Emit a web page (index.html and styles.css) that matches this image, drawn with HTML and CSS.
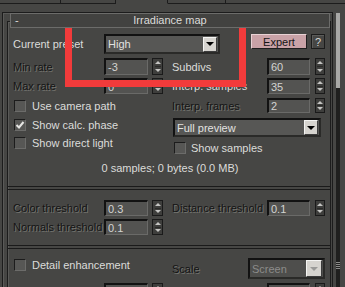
FILE: index.html
```html
<!DOCTYPE html>
<html lang="en">
<head>
	<meta charset="UTF-8" />
	<meta name="viewport" content="width=device-width, initial-scale=1.0" />
	<title>Irradiance map</title>
	<link rel="stylesheet" href="styles.css">
</head>
<body>
<div class="app">
	<div class="tabs">
		<span class="tab tab-1"></span>
		<span class="tab tab-2"></span>
		<span class="tab tab-3 active"></span>
		<span class="tab tab-4"></span>
		<span class="tab tab-5"></span>
	</div>
	<div class="workspace">
		<div class="main">
			<div class="rollout">
				<div class="rollout-head">
					<span class="toggle">-</span>
					<span class="title">Irradiance map</span>
					<span></span>
				</div>
				<div class="group">
					<div class="row r-preset">
						<span class="lbl-l">Current preset</span>
						<div class="combo combo-preset"><span class="combo-text">High</span><span class="combo-btn"></span></div>
						<span class="btn expert">Expert</span>
						<span class="btn help">?</span>
					</div>

					<div class="row r-min">
						<div class="half-l">
							<span class="lbl-l off">Min rate</span>
							<span class="field field-l">-3</span>
							<span class="spin spin-l"></span>
						</div>
						<div class="half-r">
							<span class="lbl-r">Subdivs</span>
							<span class="field field-r">60</span>
							<span class="spin spin-r"></span>
						</div>
					</div>

					<div class="row r-max">
						<div class="half-l">
							<span class="lbl-l off">Max rate</span>
							<span class="field field-l">0</span>
							<span class="spin spin-l"></span>
						</div>
						<div class="half-r">
							<span class="lbl-r">Interp. samples</span>
							<span class="field field-r">35</span>
							<span class="spin spin-r"></span>
						</div>
					</div>

					<div class="row r-camera">
						<div class="half-l">
							<label class="check"><span class="box"></span>Use camera path</label>
						</div>
						<div class="half-r">
							<span class="lbl-r off">Interp. frames</span>
							<span class="field field-r">2</span>
							<span class="spin spin-r"></span>
						</div>
					</div>

					<div class="row r-phase">
						<div class="half-l top">
							<label class="check"><span class="box"><svg width="10" height="10" viewBox="0 0 10 10"><polyline points="1.5,5 4,7.5 8.5,2" fill="none" stroke="#e6e6e4" stroke-width="2"/></svg></span>Show calc. phase</label>
						</div>
						<div class="half-r">
							<div class="combo combo-mode"><span class="combo-text">Full preview</span><span class="combo-btn"></span></div>
						</div>
					</div>

					<div class="row r-direct">
						<div class="half-l top">
							<label class="check"><span class="box"></span>Show direct light</label>
						</div>
						<div class="half-r bottom">
							<label class="check check-r"><span class="box"></span>Show samples</label>
						</div>
					</div>

					<div class="info">0 samples; 0 bytes (0.0 MB)</div>

					<div class="sep"></div>

					<div class="row r-color">
						<div class="half-l">
							<span class="lbl-l off">Color threshold</span>
							<span class="field field-l">0.3</span>
							<span class="spin spin-l"></span>
						</div>
						<div class="half-r">
							<span class="lbl-r off">Distance threshold</span>
							<span class="field field-r">0.1</span>
							<span class="spin spin-r"></span>
						</div>
					</div>

					<div class="row r-normals">
						<div class="half-l">
							<span class="lbl-l off">Normals threshold</span>
							<span class="field field-l">0.1</span>
							<span class="spin spin-l"></span>
						</div>
					</div>

					<div class="sep sep-2"></div>

					<div class="row r-detail">
						<div class="half-l top">
							<label class="check"><span class="box"></span>Detail enhancement</label>
						</div>
						<div class="half-r">
							<span class="lbl-scale off">Scale</span>
							<div class="combo combo-scale disabled"><span class="combo-text">Screen</span><span class="combo-btn"></span></div>
						</div>
					</div>

					<div class="row r-radius">
						<div class="half-l">
							<span class="lbl-l off">Radius</span>
							<span class="field field-l">60.0</span>
							<span class="spin spin-l"></span>
						</div>
						<div class="half-r">
							<span class="lbl-r off">Subdivs mult.</span>
							<span class="field field-r">0.3</span>
							<span class="spin spin-r"></span>
						</div>
					</div>
				</div>
			</div>
		</div>
		<div class="scrollbar">
			<div class="track">
				<div class="thumb"></div>
				<div class="grip"></div>
			</div>
		</div>
	</div>
	<div class="annot"></div>
</div>
</body>
</html>
```

FILE: styles.css
```css
body {
	margin: 0;
	background: #464644;
	font-family: "Liberation Sans", Arial, sans-serif;
	font-size: 11px;
	color: #dcdcda;
}
.app {
	position: relative;
	width: 345px;
	height: 287px;
	overflow: hidden;
}

/* top tab strip */
.tabs {
	display: flex;
	height: 4px;
}
.tab {
	box-sizing: border-box;
	border-right: 1px solid #1c1c1c;
	border-bottom: 1px solid #1c1c1c;
}
.tab-1 { width: 61px; }
.tab-2 { width: 55px; }
.tab-3 { width: 52px; }
.tab-4 { width: 58px; }
.tab-5 { flex: 1; border-right: none; }
.tab.active { border-bottom-color: transparent; }

.workspace {
	display: flex;
	height: 283px;
}
.main {
	width: 333px;
}

/* rollout */
.rollout {
	margin: 8px 0 0 2px;
	width: 331px;
	height: 275px;
	box-sizing: border-box;
	border: 1px solid #1c1c1c;
	border-bottom: none;
	box-shadow: inset 1px 1px 0 #5a5a58;
}
.rollout-head {
	position: relative;
	z-index: 1;
	margin-left: 7px;
	width: 320px;
	height: 15px;
	box-sizing: border-box;
	border: 1px solid #6c6c6a;
	background: #424240;
	display: grid;
	grid-template-columns: 20px 1fr 20px;
	align-items: center;
	line-height: 13px;
}
.toggle {
	padding-left: 4px;
}
.title {
	text-align: center;
}
.group {
	margin: -7px 0 0 4px;
	width: 324px;
	height: 266px;
	box-sizing: border-box;
	border: 1px solid #1c1c1c;
	border-bottom: none;
	box-shadow: inset 1px 1px 0 #5a5a58;
	padding: 12px 0 0 5px;
}

/* rows */
.row {
	display: flex;
	align-items: center;
}
.half-l {
	width: 150px;
	height: 100%;
	display: flex;
	align-items: center;
}
.half-r {
	width: 153px;
	height: 100%;
	margin-left: 9px;
	display: flex;
	align-items: center;
}
.half-l.top { align-items: flex-start; }
.half-r.bottom { align-items: flex-end; }
.lbl-l { width: 91px; flex: none; white-space: nowrap; }
.lbl-r { width: 95px; flex: none; white-space: nowrap; }
.lbl-scale { width: 76px; flex: none; }
.off {
	color: #141414;
	text-shadow: 1px 1px 0 #74746f;
}

.r-preset { height: 20px; align-items: flex-start; }
.r-preset .lbl-l { line-height: 20px; }
.r-min { margin-top: 4px; height: 17px; }
.r-max { margin-top: 3px; height: 16px; }
.r-camera { margin-top: 4px; height: 15px; }
.r-camera .check { margin-top: 0; }
.r-phase { margin-top: 5px; height: 19px; }
.r-phase .check { margin-top: 1px; }
.r-direct { margin-top: 0; height: 17px; }
.r-color { margin-top: 10px; height: 16px; }
.r-normals { margin-top: 3px; height: 16px; }
.r-detail { margin-top: 9px; height: 21px; }
.r-detail .check { margin-top: 1px; }
.r-radius { margin-top: 4px; height: 16px; }

/* spinner fields */
.field {
	height: 100%;
	box-sizing: border-box;
	flex: none;
	background: #535351;
	border-style: solid;
	border-width: 2px 1px 1px 2px;
	border-color: #121212 #6a6a68 #6a6a68 #121212;
	padding-left: 2px;
	display: flex;
	align-items: center;
	color: #d4d4d2;
}
.field-l { width: 44px; }
.field-r { width: 43px; }
.spin {
	height: 100%;
	box-sizing: border-box;
	flex: none;
	background: #3e3e3c linear-gradient(#2a2a28, #2a2a28) center / 6px 1px no-repeat;
	border: 1px solid #1a1a1a;
	display: flex;
	flex-direction: column;
	align-items: center;
	justify-content: space-around;
}
.spin::before,
.spin::after {
	content: "";
	width: 0;
	height: 0;
	border-left: 3px solid transparent;
	border-right: 3px solid transparent;
}
.spin::before { border-bottom: 3px solid #c4c4c2; }
.spin::after { border-top: 3px solid #c4c4c2; }
.spin-l { width: 11px; margin-left: 4px; }
.spin-r { width: 10px; margin-left: 5px; }

/* drop-down lists */
.combo {
	box-sizing: border-box;
	display: flex;
	align-items: center;
	background: #575755;
	border: 2px solid #121212;
	border-right-color: #2a2a28;
	border-bottom-color: #2a2a28;
	flex: none;
}
.combo-text {
	flex: 1;
	padding-left: 2px;
	color: #e2e2e0;
}
.combo-btn {
	width: 14px;
	height: 15px;
	margin-right: 1px;
	box-sizing: border-box;
	background: #d6d4cf;
	border: 1px solid;
	border-color: #f4f4f2 #3c3c3c #3c3c3c #f4f4f2;
	display: flex;
	align-items: center;
	justify-content: center;
}
.combo-btn::after {
	content: "";
	width: 0;
	height: 0;
	border-left: 4px solid transparent;
	border-right: 4px solid transparent;
	border-top: 4px solid #000;
}
.combo-preset { width: 116px; height: 20px; }
.combo-mode { width: 148px; height: 19px; margin-left: 1px; }
.combo-scale { width: 77px; height: 21px; }
.combo-scale .combo-btn { height: 17px; width: 16px; }
.combo.disabled { background: #4e4e4c; }
.combo.disabled .combo-text { color: #8c8c8a; }
.combo.disabled .combo-btn::after { border-top-color: #9a9a98; }

/* buttons */
.btn {
	box-sizing: border-box;
	height: 15px;
	border: 1px solid;
	display: flex;
	align-items: center;
	justify-content: center;
	flex: none;
}
.expert {
	width: 56px;
	margin-left: 31px;
	background: #c9a2a7;
	border-color: #e8d2d4 #1e1e1e #1e1e1e #e8d2d4;
	color: #141414;
}
.help {
	width: 14px;
	margin-left: 4px;
	background: #464644;
	border-color: #1c1c1c;
	box-shadow: inset 1px 1px 0 #5c5c5a;
	color: #d6d6d4;
}

/* checkboxes */
.check {
	display: flex;
	align-items: center;
	margin-left: 1px;
	white-space: nowrap;
}
.check-r { margin-left: 2px; }
.box {
	width: 12px;
	height: 12px;
	box-sizing: border-box;
	background: #575755;
	border: 1px solid;
	border-color: #1c1c1c #6c6c6a #6c6c6a #1c1c1c;
	margin-right: 6px;
	display: flex;
	align-items: center;
	justify-content: center;
}
.check-r .box { margin-right: 5px; }

.info {
	margin-top: 8px;
	height: 13px;
	line-height: 13px;
	text-align: center;
	padding-right: 3px;
}
.sep {
	margin: 11px 0 0 -5px;
	height: 4px;
	box-sizing: border-box;
	border-top: 1px solid #1a1a1a;
	border-bottom: 1px solid #1a1a1a;
}
.sep-2 { margin-top: 10px; }

/* scrollbar */
.scrollbar {
	width: 12px;
	padding: 9px 0 0 3px;
	box-sizing: border-box;
}
.track {
	width: 4px;
	height: 100%;
	background: #1f1f1e;
}
.thumb {
	height: 75px;
	background: #a8a8a6;
}
.grip {
	margin-top: 174px;
	height: 8px;
	background: repeating-linear-gradient(#8a8a88 0 1px, transparent 1px 2px);
}

/* red highlight annotation */
.annot {
	position: absolute;
	left: 65px;
	top: 15px;
	width: 181px;
	height: 72px;
	box-sizing: border-box;
	border: 7px solid #f23b3b;
}
```
